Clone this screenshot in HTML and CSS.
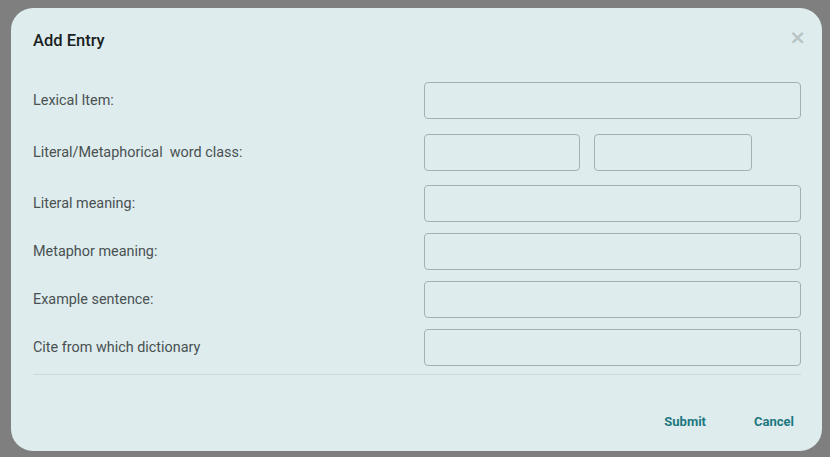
FILE: index.html
```html
<!DOCTYPE html>
<html>
<head>
<meta charset="utf-8">
<link rel="stylesheet" href="styles.css">
</head>
<body>
<div class="modal">
  <div class="modal-header">
    <h2 class="title">Add Entry</h2>
    <button class="close" aria-label="Close">&times;</button>
  </div>
  <form class="form">
    <div class="row r1">
      <label class="label">Lexical Item:</label>
      <input class="input" type="text">
    </div>
    <div class="row r2">
      <label class="label">Literal/Metaphorical&nbsp; word class:</label>
      <div class="pair">
        <input class="input small a" type="text">
        <input class="input small b" type="text">
      </div>
    </div>
    <div class="row">
      <label class="label">Literal meaning:</label>
      <input class="input" type="text">
    </div>
    <div class="row">
      <label class="label">Metaphor meaning:</label>
      <input class="input" type="text">
    </div>
    <div class="row">
      <label class="label">Example sentence:</label>
      <input class="input" type="text">
    </div>
    <div class="row last">
      <label class="label">Cite from which dictionary</label>
      <input class="input" type="text">
    </div>
  </form>
  <div class="divider"></div>
  <div class="actions">
    <button class="btn">Submit</button>
    <button class="btn">Cancel</button>
  </div>
</div>
</body>
</html>
```

FILE: styles.css
```css
html, body {
  margin: 0;
  padding: 0;
  height: 100%;
  background: #7f7f7f;
  font-family: Roboto, "Liberation Sans", sans-serif;
}
body {
  padding: 8px 8px 6px 11px;
  box-sizing: border-box;
}
.modal {
  width: 811px;
  height: 443px;
  background: #deeced;
  border-radius: 22px;
  box-sizing: border-box;
  padding: 0 21px 0 22px;
  display: flex;
  flex-direction: column;
}
.modal-header {
  display: flex;
  justify-content: space-between;
  align-items: flex-start;
  padding-top: 21px;
  height: 74px;
  box-sizing: border-box;
}
.title {
  margin: 0;
  font-size: 16.5px;
  font-weight: 500;
  line-height: 24px;
  color: #1b1f1f;
}
.close {
  border: none;
  background: none;
  padding: 0;
  margin: -4px -5px 0 0;
  font-size: 20px;
  line-height: 24px;
  font-weight: 700;
  color: #b9c5c5;
  font-family: "DejaVu Sans", sans-serif;
}
.form {
  display: flex;
  flex-direction: column;
}
.row {
  display: flex;
  align-items: center;
  height: 37px;
  margin-bottom: 11px;
}
.row.r1 { margin-bottom: 15px; }
.row.r2 { margin-bottom: 14px; }
.row.last { margin-bottom: 0; }
.label {
  width: 391px;
  flex: none;
  font-size: 14.4px;
  color: #495152;
}
.input {
  width: 377px;
  height: 37px;
  box-sizing: border-box;
  border: 1px solid #a3b1b2;
  border-radius: 4px;
  background: transparent;
  padding: 0 10px;
  font: inherit;
}
.pair {
  display: flex;
  gap: 14px;
}
.input.small.a { width: 156px; }
.input.small.b { width: 158px; }
.divider {
  margin-top: 8px;
  height: 1px;
  background: #cbd9d9;
}
.actions {
  display: flex;
  justify-content: flex-end;
  gap: 34px;
  margin-top: 35px;
}
.btn {
  border: none;
  background: none;
  padding: 4px 7px;
  font-family: Roboto, "Liberation Sans", sans-serif;
  font-size: 13px;
  font-weight: 700;
  color: #1d7880;
  line-height: 16px;
}
```
